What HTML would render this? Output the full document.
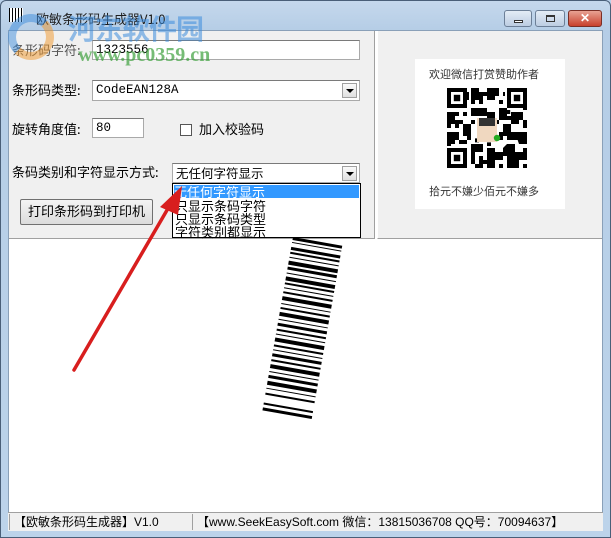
<!DOCTYPE html>
<html><head><meta charset="utf-8"><style>
*{margin:0;padding:0;box-sizing:border-box}
body{width:611px;height:538px;overflow:hidden;background:#b9d1ea;font-family:"Liberation Sans","Noto Sans CJK SC",sans-serif;position:relative}
.abs{position:absolute}
.frame{left:0;top:0;width:611px;height:538px;background:linear-gradient(#c5d8ec,#b5cde6 30px,#bcd3ea);border:1px solid #4a5f78;border-radius:6px 6px 0 0}
.title{left:36px;top:9px;font-size:13px;color:#1e1e1e;font-family:"Noto Sans CJK SC",sans-serif}
.client{left:8px;top:30px;width:595px;height:500px;background:#fff;border:1px solid #8aa0b8}
.lp{left:9px;top:31px;width:366px;height:208px;background:#f0f0f0;border-right:1px solid #a0a0a0;border-bottom:1px solid #a0a0a0}
.rp{left:377px;top:31px;width:225px;height:208px;background:#f0f0f0;border-bottom:1px solid #a0a0a0;border-left:1px solid #fff}
.lbl{font-size:13px;color:#000;font-family:"Noto Sans CJK SC",sans-serif;line-height:16px}
.inp{background:#fff;border:1px solid #a9a9a9;border-top-color:#7a7a7a;font-family:"Liberation Mono","Noto Sans CJK SC",monospace;font-size:12.5px;padding-left:3px;line-height:18px}
.dd{position:absolute;right:2px;top:2px;width:15px;height:15px;background:linear-gradient(#fafafa,#e0e0e0);border:1px solid #a0a0a0}
.dd:after{content:"";position:absolute;left:3px;top:5px;border-left:4px solid transparent;border-right:4px solid transparent;border-top:4px solid #000}
.btn{border:1px solid #707070;background:linear-gradient(#f4f4f4,#dcdcdc);font-size:13px;text-align:center;font-family:"Noto Sans CJK SC",sans-serif;line-height:22px;border-radius:2px}
.status{left:8px;top:512px;height:19px;background:#f0f0f0;border-top:1px solid #a0a0a0;width:595px}
.sb{top:514px;height:16px;font-size:12px;line-height:16px;font-family:"Liberation Sans","Noto Sans CJK SC",sans-serif;border-left:1px solid #a0a0a0;padding-left:4px}
.bar{background:#000;position:absolute;left:0}
</style></head><body>
<div class="abs frame"></div>
<div class="abs" style="left:9px;top:8px;width:14px;height:14px;background:repeating-linear-gradient(90deg,#000 0 1px,#fff 1px 3px);"></div>
<div class="abs title">欧敏条形码生成器V1.0</div>
<div class="abs" style="left:504px;top:10px;width:28px;height:17px;border:1px solid #6c7f97;border-radius:3px;background:linear-gradient(#e3ecf6,#bccde2)"><div style="position:absolute;left:9px;top:9px;width:9px;height:3px;border:1px solid #333;background:#fff"></div></div>
<div class="abs" style="left:535px;top:10px;width:30px;height:17px;border:1px solid #6c7f97;border-radius:3px;background:linear-gradient(#e3ecf6,#bccde2)"><div style="position:absolute;left:10px;top:4px;width:9px;height:7px;border:1px solid #333;border-top-width:2px"></div></div>
<div class="abs" style="left:568px;top:10px;width:34px;height:17px;border:1px solid #7a2e25;border-radius:3px;background:linear-gradient(#e8a293,#c8402c);color:#fff;font-weight:bold;font-size:12px;text-align:center;line-height:15px">✕</div>

<div class="abs client"></div>
<div class="abs lp"></div>
<div class="abs rp"></div>

<div class="abs lbl" style="left:12px;top:42px;color:#555">条形码字符:</div>
<div class="abs inp" style="left:92px;top:40px;width:268px;height:20px">1323556</div>

<div class="abs lbl" style="left:12px;top:82px">条形码类型:</div>
<div class="abs inp" style="left:92px;top:80px;width:268px;height:21px">CodeEAN128A<div class="dd"></div></div>

<div class="abs lbl" style="left:12px;top:121px">旋转角度值:</div>
<div class="abs inp" style="left:92px;top:118px;width:52px;height:20px">80</div>
<div class="abs" style="left:180px;top:124px;width:12px;height:12px;background:#fff;border:1px solid #555"></div>
<div class="abs lbl" style="left:199px;top:121px">加入校验码</div>

<div class="abs lbl" style="left:12px;top:164px">条码类别和字符显示方式:</div>
<div class="abs inp" style="left:172px;top:163px;width:188px;height:20px;font-family:'Noto Sans CJK SC',sans-serif">无任何字符显示<div class="dd"></div></div>
<div class="abs" style="left:172px;top:183px;width:189px;height:55px;background:#fff;border:1px solid #000;font-size:13px;line-height:13px;font-family:'Noto Sans CJK SC',sans-serif">
<div style="background:#3399ff;color:#fff;margin:1px">无任何字符显示</div>
<div style="padding-left:2px">只显示条码字符</div>
<div style="padding-left:2px">只显示条码类型</div>
<div style="padding-left:2px">字符类别都显示</div>
</div>
<div class="abs btn" style="left:20px;top:199px;width:133px;height:26px">打印条形码到打印机</div>

<div class="abs" style="left:415px;top:59px;width:150px;height:150px;background:#fff"></div>
<div class="abs" style="left:429px;top:66px;font-size:11px;color:#333">欢迎微信打赏赞助作者</div>
<svg class="abs" style="left:443px;top:88px" width="88" height="80" viewBox="0 0 22 20">
<rect width="22" height="20" fill="#fff"/>
<g fill="#000">
<rect x="1" y="0" width="5" height="5"/><rect x="16" y="0" width="5" height="5"/><rect x="1" y="15" width="5" height="5"/>
</g>
<g fill="#fff"><rect x="2" y="1" width="3" height="3"/><rect x="17" y="1" width="3" height="3"/><rect x="2" y="16" width="3" height="3"/></g>
<g fill="#000"><rect x="2.7" y="1.7" width="1.6" height="1.6"/><rect x="17.7" y="1.7" width="1.6" height="1.6"/><rect x="2.7" y="16.7" width="1.6" height="1.6"/>
<path d="M7 0h2v1h1v2h-2v1h-1zM11 0h3v2h-1v1h-2zM8 5h3v1h2v2h-2v-1h-3zM1 6h2v2h2v1h-3v1h-1zM14 5h2v2h1v1h-3zM17 6h3v2h-1v1h-2zM1 11h3v2h-1v1h-2zM5 9h2v3h-2zM15 9h2v2h2v2h-3v-1h-1zM18 11h3v3h-2zM7 14h3v2h-2v3h-1zM11 15h2v1h2v2h-2v2h-2zM16 14h2v2h3v2h-2v2h-3v-3h-1v-2zM9 17h1v3h-2v-1h1zM12 2h1v1h-1zM7 8h1v1h-1zM14 11h1v2h-1z"/>
<path d="M10 1h1v1h-1zM14 3h1v1h-1zM7 5h1v2h-1zM6 1h.5v2h-.5zM9 3h1v1h-1zM15 1h.5v1h-.5zM3 6h1v1h-1zM5 6h1v1h-1zM3 9h1v1h-1zM1 13.5h1v1h-1zM4 13h2v1h-2zM6 11h1v2h-1zM13 8h1v1h-1zM20 8h1v2h-1zM20 15h1v1h-1zM17 18h1v2h-1zM20 19h1v1h-1zM10 18h1v1h-1zM13 17h1v1h-1zM14 19h1v1h-1zM11 13.6h1v.9h-1zM8 12.6h1v1h-1zM20 4.5h1v1h-1zM16 5.5h.8v1h-.8z"/></g>
<rect x="8.5" y="7.5" width="5" height="6" fill="#f0d8c0"/><rect x="9" y="7.5" width="4" height="2" fill="#333"/><circle cx="13.5" cy="12.5" r="0.8" fill="#2a2"/>
</svg>
<div class="abs" style="left:429px;top:183px;font-size:11px;color:#333">拾元不嫌少佰元不嫌多</div>

<div class="abs" style="left:277px;top:240px;width:50px;height:180px;transform:rotate(10deg);transform-origin:50% 50%">
<div class="bar" style="top:0;height:3px;width:50px"></div>
<div class="bar" style="top:5px;height:1px;width:50px"></div>
<div class="bar" style="top:10px;height:3px;width:50px"></div>
<div class="bar" style="top:15px;height:2px;width:50px"></div>
<div class="bar" style="top:20px;height:1px;width:50px"></div>
<div class="bar" style="top:24px;height:4px;width:50px"></div>
<div class="bar" style="top:30px;height:3px;width:50px"></div>
<div class="bar" style="top:36px;height:1px;width:50px"></div>
<div class="bar" style="top:40px;height:4px;width:50px"></div>
<div class="bar" style="top:46px;height:2px;width:50px"></div>
<div class="bar" style="top:51px;height:1px;width:50px"></div>
<div class="bar" style="top:55px;height:2px;width:50px"></div>
<div class="bar" style="top:60px;height:4px;width:50px"></div>
<div class="bar" style="top:67px;height:1px;width:50px"></div>
<div class="bar" style="top:71px;height:2px;width:50px"></div>
<div class="bar" style="top:76px;height:4px;width:50px"></div>
<div class="bar" style="top:83px;height:1px;width:50px"></div>
<div class="bar" style="top:87px;height:3px;width:50px"></div>
<div class="bar" style="top:93px;height:2px;width:50px"></div>
<div class="bar" style="top:98px;height:1px;width:50px"></div>
<div class="bar" style="top:102px;height:4px;width:50px"></div>
<div class="bar" style="top:109px;height:2px;width:50px"></div>
<div class="bar" style="top:114px;height:1px;width:50px"></div>
<div class="bar" style="top:118px;height:3px;width:50px"></div>
<div class="bar" style="top:124px;height:2px;width:50px"></div>
<div class="bar" style="top:129px;height:4px;width:50px"></div>
<div class="bar" style="top:136px;height:1px;width:50px"></div>
<div class="bar" style="top:140px;height:3px;width:50px"></div>
<div class="bar" style="top:146px;height:4px;width:50px"></div>
<div class="bar" style="top:153px;height:1px;width:50px"></div>
<div class="bar" style="top:158px;height:2px;width:50px"></div>
<div class="bar" style="top:168px;height:2px;width:50px"></div>
<div class="bar" style="top:173px;height:3px;width:50px"></div>
</div>

<svg class="abs" style="left:0;top:0" width="611" height="538">
<line x1="74" y1="370" x2="170" y2="205" stroke="#d81e1e" stroke-width="3.5" stroke-linecap="round"/>
<polygon points="182,186 160,207 178,215" fill="#d81e1e"/>
</svg>

<!-- watermark on top -->
<div class="abs" style="left:8px;top:14px;width:46px;height:46px;border-radius:50%;border:8px solid rgba(60,140,220,0.5);border-right-color:rgba(240,150,40,0.5);border-bottom-color:rgba(240,150,40,0.5)"></div>
<div class="abs" style="left:68px;top:12px;font-size:28px;font-weight:bold;color:rgba(60,140,220,0.55);font-family:'Noto Sans CJK SC',sans-serif;line-height:32px;letter-spacing:-1px">河东软件园</div>
<div class="abs" style="left:78px;top:44px;font-size:20px;font-weight:bold;color:rgba(60,160,60,0.7);font-family:'Liberation Serif',serif;line-height:22px">www.pc0359.cn</div>

<div class="abs status"></div>
<div class="abs sb" style="left:9px;width:178px">【欧敏条形码生成器】V1.0</div>
<div class="abs sb" style="left:192px;width:380px">【www.SeekEasySoft.com 微信：13815036708 QQ号：70094637】</div>
</body></html>
